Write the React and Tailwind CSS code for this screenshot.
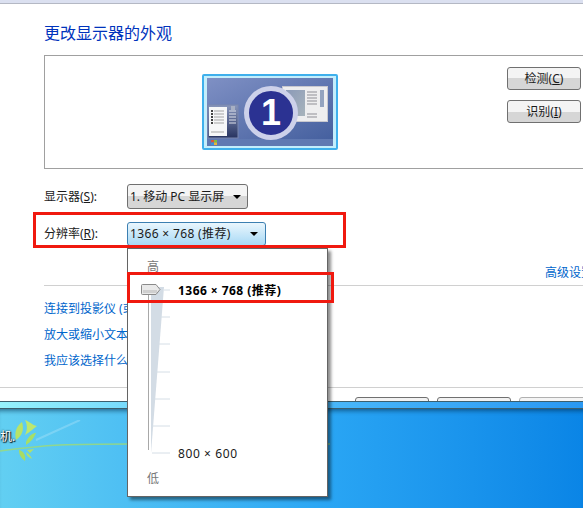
const FONT = "font-['Noto_Sans','Noto_Sans_CJK_SC',sans-serif]";

function MonitorArt() {
  return (
    <svg width="136" height="76" viewBox="0 0 136 76" className="block">
      <defs>
        <linearGradient id="screen" x1="0" y1="0" x2="1" y2="1">
          <stop offset="0" stopColor="#7f90c4" />
          <stop offset="1" stopColor="#45609f" />
        </linearGradient>
        <linearGradient id="strip" x1="0" y1="0" x2="0" y2="1">
          <stop offset="0" stopColor="#8896bc" />
          <stop offset="1" stopColor="#27335f" />
        </linearGradient>
        <linearGradient id="pane" x1="0" y1="0" x2="1" y2="1">
          <stop offset="0" stopColor="#8b9ab8" />
          <stop offset="1" stopColor="#a8b4bc" />
        </linearGradient>
      </defs>
      <rect x="1" y="1" width="134" height="74" rx="1" fill="#c4eefc" stroke="#3fb0ec" strokeWidth="2" />
      <rect x="5" y="4" width="126" height="61" fill="url(#screen)" />
      <rect x="5" y="65" width="126" height="7" fill="#6079b2" />
      <rect x="6" y="31" width="30" height="33" fill="url(#strip)" stroke="#7b88ae" />
      <rect x="7" y="33" width="18" height="29" fill="#f6f7f8" />
      <path d="M9 37h2M9 40h2M9 43h2M9 46h2M9 49h2" stroke="#444" strokeWidth="2" />
      <path d="M12 37h10M12 40h10M12 43h10M12 46h10M12 49h10M9 58h13" stroke="#a5a5a5" />
      <path d="M27 37h7M27 40h7M27 43h7M27 46h7M27 49h7" stroke="#dfe2ea" />
      <rect x="29" y="32" width="4" height="4" fill="#a8b0c4" />
      <rect x="9" y="66" width="3" height="2.500" fill="#d9573a" />
      <rect x="12" y="66" width="3" height="2.500" fill="#7fbf3f" />
      <rect x="9" y="68.500" width="3" height="2.500" fill="#3f8fd9" />
      <rect x="12" y="68.500" width="3" height="2.500" fill="#e8b53a" />
      <rect x="80.500" y="12.500" width="45" height="35" fill="#eeeeef" stroke="#c8c8cf" />
      <rect x="84" y="16" width="19" height="26" fill="url(#pane)" />
      <path d="M105 18h10M105 21h10M105 24h10M105 27h10M105 30h10M105 40h10M105 43h10" stroke="#8f8f96" />
      <rect x="118" y="16" width="4" height="17" fill="#93a3bf" />
      <circle cx="69" cy="39" r="24.500" fill="#2b3292" stroke="#cdd1ea" strokeWidth="5" />
      <text x="69" y="51" textAnchor="middle" fontFamily="Liberation Sans" fontWeight="bold" fontSize="36" fill="#fff">1</text>
    </svg>
  );
}

function SliderArt() {
  return (
    <svg width="44" height="172" viewBox="0 0 44 172" className="block">
      <path d="M24 3 L37 3 L24 169 Z" fill="#d3dce5" />
      <path d="M21.500 8V166" stroke="#a8a8a8" />
      <path d="M37 6H43M34 33H43M32 60H43M29 88H43M27 115H43M25 142H43M25 169H43" stroke="#d5dee6" />
      <path d="M15.500 0.500H29L33 5.500L29 10.500H15.500Q14.500 10.500 14.500 9.500V1.500Q14.500 0.500 15.500 0.500Z" fill="#e9e9e9" stroke="#8a8a8a" />
      <path d="M16 7.500H30" stroke="#cfcfcf" strokeWidth="3" />
    </svg>
  );
}

function Plant() {
  return (
    <svg width="330" height="50" viewBox="0 0 330 50" className="block">
      <path d="M36 20 L80 0" stroke="#ffffff" strokeWidth="2" opacity="0.2" />
      <path d="M0 31 C22 28 40 26 60 25 C85 24 110 24 130 24 C190 24 260 24 330 24" stroke="#a3dc6e" strokeWidth="1.500" fill="none" opacity="0.75" />
      <path d="M16 20 C14 11 17 6 22 2 C24 9 23 15 16 20Z" fill="#b7e368" />
      <path d="M25 15 C28 9 27 4 25 0 C30 2 34 6 37 6 C33 9 30 12 25 15Z" fill="#bde76e" />
      <path d="M26 22 C29 15 33 13 36 13 C34 18 31 22 26 25Z" fill="#a7df66" />
      <path d="M19 30 C19 35 21 38 25 41 C26 36 24 31 19 30Z" fill="#a9dc62" />
      <path d="M26 32 C29 34 31 36 32 39 C28 37 26 35 26 32Z" fill="#b0e06c" />
      <path d="M27 30 L34 29 L30 33Z" fill="#b0e06c" />
    </svg>
  );
}

function AeroButton({ children, className = "" }) {
  return (
    <div className={`flex items-center justify-center rounded-[3px] border border-[#707070] bg-gradient-to-b from-[#f4f4f4] from-50% to-[#d6d6d6] to-50% text-[12px] text-[#1a1a1a] ${className}`}>
      {children}
    </div>
  );
}

function Caret() {
  return <span className="h-0 w-0 border-x-[4px] border-t-[4px] border-x-transparent border-t-black" />;
}

export default function App() {
  return (
    <div className={`relative flex h-[508px] w-[583px] flex-col overflow-hidden bg-white ${FONT}`}>
      {/* window body */}
      <div className="h-[401px] shrink-0 overflow-hidden">
        <div className="h-[4px] border-b border-[#b4b8c4] bg-[#dbe0f0]" />
        <div className="pl-[44px] pt-[20px]">
          <h1 className="text-[16px] font-normal leading-[18px] text-[#0033bc]">更改显示器的外观</h1>

          <div className="mt-[13px] flex h-[114px] border-y border-l border-[#a0a0a0] pl-[157px] pt-[18px]">
            <MonitorArt />
            <div className="ml-auto mr-[2px] mt-[-7px] flex flex-col gap-[10px]">
              <AeroButton className="h-[23px] w-[74px]"><span>检测(<u>C</u>)</span></AeroButton>
              <AeroButton className="h-[23px] w-[74px]"><span>识别(<u>I</u>)</span></AeroButton>
            </div>
          </div>

          <div className="mt-[15px] flex items-center text-[12px] text-[#1a1a1a]">
            <span className="w-[83px]">显示器(<u>S</u>):</span>
            <div className="flex h-[25px] w-[121px] items-center justify-between rounded-[3px] border border-[#707070] bg-gradient-to-b from-[#f4f4f4] from-50% to-[#d6d6d6] to-50% pl-[2px] pr-[6px]">
              <span>1. 移动 PC 显示屏</span>
              <Caret />
            </div>
          </div>

          <div className="mt-[13px] flex items-center text-[12px] text-[#1a1a1a]">
            <span className="w-[83px]">分辨率(<u>R</u>):</span>
            <div className="flex h-[24px] w-[139px] items-center justify-between rounded-[3px] border border-[#3c7fb1] bg-gradient-to-b from-[#eaf6fd] to-[#a7d9f5] pl-[2px] pr-[7px]">
              <span className="tracking-[0.35px]">1366 × 768 (推荐)</span>
              <Caret />
            </div>
          </div>

          <div className="mt-[19px] h-[15px] overflow-hidden whitespace-nowrap pl-[501px] text-[12px] leading-[15px] text-[#0066cc]">高级设置</div>

          <div className="mt-[5px] border-t border-[#d0d0d0]" />

          <div className="mt-[15px] flex flex-col gap-[10px] whitespace-nowrap text-[12px] leading-[16px] text-[#0066cc]">
            <span>连接到投影仪 (或按 键)</span>
            <span>放大或缩小文本和其他项目</span>
            <span>我应该选择什么显示器设置?</span>
          </div>
        </div>

        <div className="mt-[18px] border-t border-[#d0d0d0]" />

        <div className="mt-[9px] flex gap-[8px] pl-[355px]">
          <div className="h-[23px] w-[74px] shrink-0 rounded-[3px] border border-[#707070] bg-[#f2f2f2]" />
          <div className="h-[23px] w-[74px] shrink-0 rounded-[3px] border border-[#707070] bg-[#f2f2f2]" />
          <div className="h-[23px] w-[74px] shrink-0 rounded-[3px] border border-[#b0b0b0] bg-[#f4f4f4]" />
        </div>
      </div>

      {/* window frame bottom */}
      <div className="h-[8px] shrink-0 border-y border-[#3b5f6e] bg-gradient-to-r from-[#96f2fc] via-[#4dbcfb] to-[#2a98f2]" />

      {/* desktop */}
      <div className="flex min-h-0 flex-1 flex-col bg-gradient-to-r from-[#62cff2] via-[#2aa6f4] via-55% to-[#0a85e6] pt-[11px] shadow-[inset_0_5px_4px_-3px_rgba(0,40,70,0.55)]">
        <div className="relative">
          <Plant />
          <span className="absolute left-0 top-[10px] text-[12px] leading-[14px] text-white [text-shadow:0_0_2px_#000,1px_1px_1px_#000]">机.</span>
        </div>
      </div>

      {/* dropdown popup */}
      <div className="absolute left-[127px] top-[248px] flex h-[249px] w-[201px] flex-col border border-[#646464] bg-white pl-[19px] text-[12px] text-[#1a1a1a] shadow-[3px_3px_3px_rgba(0,0,0,0.45)]">
        <span className="mt-[10px] leading-[16px] text-[#777]">高</span>
        <div className="mt-[9px] flex">
          <div className="-ml-[20px] shrink-0"><SliderArt /></div>
          <div className="ml-[7px] flex flex-1 flex-col justify-between leading-[14px]">
            <span className="font-bold tracking-[0.45px] text-black">1366 × 768 (推荐)</span>
            <span className="mb-[-5px] tracking-[0.6px]">800 × 600</span>
          </div>
        </div>
        <span className="mt-[15px] leading-[16px] text-[#777]">低</span>
      </div>

      {/* red annotations */}
      <div className="absolute left-[33px] top-[212px] h-[36px] w-[313px] border-[3px] border-[#f0190f]" />
      <div className="absolute left-[127px] top-[272px] h-[31px] w-[207px] border-[3px] border-[#f0190f]" />
    </div>
  );
}
